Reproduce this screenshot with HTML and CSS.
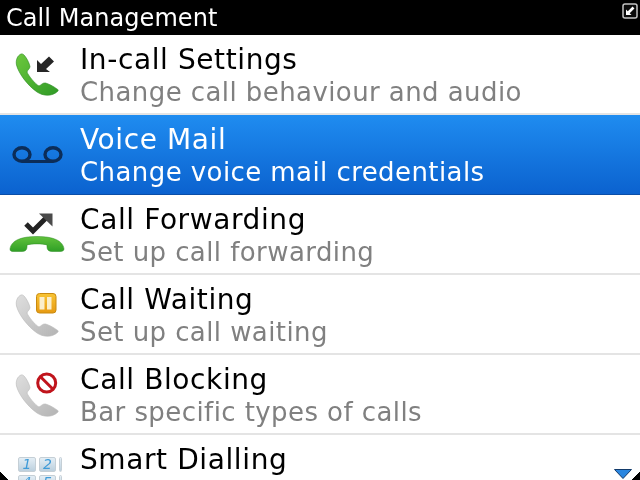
FILE: index.html
```html
<!DOCTYPE html>
<html lang="en">
<head>
<meta charset="utf-8">
<title>Call Management</title>
<link rel="stylesheet" href="styles.css">
</head>
<body>
<svg class="defs" width="0" height="0" aria-hidden="true">
  <defs>
    <linearGradient id="green" x1="0" y1="0" x2="1" y2="1">
      <stop offset="0" stop-color="#6cc83e"/><stop offset="1" stop-color="#2f9a26"/>
    </linearGradient>
    <linearGradient id="greenh" x1="0" y1="0" x2="0" y2="1">
      <stop offset="0" stop-color="#62c23c"/><stop offset="1" stop-color="#2f9f26"/>
    </linearGradient>
    <linearGradient id="grey" x1="0" y1="0" x2="1" y2="1">
      <stop offset="0" stop-color="#dedede"/><stop offset="1" stop-color="#b4b4b4"/>
    </linearGradient>
    <linearGradient id="amber" x1="0" y1="0" x2="0" y2="1">
      <stop offset="0" stop-color="#f8c434"/><stop offset="1" stop-color="#e79a12"/>
    </linearGradient>
    <path id="handset" d="M5 0 C1.500 1.500 -0.500 6 0.500 11 C2.500 19 11 31 21 38 C27 42 36 43 42 37 C42.500 36 42 35.500 41 35 C37 32 33 30 29.500 29 C27 28.500 25 31 23 32 C19 30 12 21 11 18 C11.500 16 14 14.500 14 12.500 C13 8 10 3 8 1 C7 0 6 -0.300 5 0 Z"/>
  </defs>
</svg>
<div class="screen">
  <header class="titlebar">
    <span class="title">Call Management</span>
    <svg class="corner-icon" width="16" height="16" viewBox="0 0 16 16">
      <rect x="1" y="1" width="14" height="14" rx="2" fill="#0a0a0a" stroke="#c4c4c4" stroke-width="1.500"/>
      <path d="M11.500 4.500 L6.500 9.500" stroke="#fff" stroke-width="2.600"/>
      <path d="M4 6.500 V12 H9.500 Z" fill="#fff"/>
    </svg>
  </header>
  <ul class="list">
    <li class="row">
      <svg class="icon" width="64" height="64" viewBox="0 0 64 64">
        <use href="#handset" x="16" y="11" fill="url(#green)" stroke="#2a8a20" stroke-width=".6"/>
        <path d="M37 29 V17 L41 21 L49 13.500 L54 18.500 L46 26 L50 29 Z" fill="#262626"/>
      </svg>
      <div class="text"><div class="name">In-call Settings</div><div class="desc">Change call behaviour and audio</div></div>
    </li>
    <li class="row selected">
      <svg class="icon" width="64" height="64" viewBox="0 0 64 64">
        <g fill="none" stroke="#0c2d58" stroke-width="3.400">
          <ellipse cx="22" cy="31.500" rx="8" ry="6.800"/><ellipse cx="53" cy="31.500" rx="8" ry="6.800"/>
          <path d="M22 38.500 H53" stroke-width="3"/>
        </g>
      </svg>
      <div class="text"><div class="name">Voice Mail</div><div class="desc">Change voice mail credentials</div></div>
    </li>
    <li class="row">
      <svg class="icon" width="64" height="64" viewBox="0 0 64 64">
        <path d="M26 21 L33 28 L46 15" fill="none" stroke="#232323" stroke-width="5"/>
        <path d="M39 10.500 H52.500 V23.500 Z" fill="#4a4a4a"/>
        <path d="M10 46 C11 38 20 33.500 37 33.500 C54 33.500 63 38 64 46 C64 48 62 48.500 59 48.500 H52 C49 48.500 47 47 47 44 V42 C43 40.500 31 40.500 27 42 V44 C27 47 25 48.500 22 48.500 H14 C11 48.500 10 48 10 46 Z" fill="url(#greenh)" stroke="#2a8a20" stroke-width=".5"/>
      </svg>
      <div class="text"><div class="name">Call Forwarding</div><div class="desc">Set up call forwarding</div></div>
    </li>
    <li class="row">
      <svg class="icon" width="64" height="64" viewBox="0 0 64 64">
        <use href="#handset" x="16" y="12" fill="url(#grey)" stroke="#b8b8b8" stroke-width=".6"/>
        <rect x="36.500" y="10.500" width="19.500" height="19.500" rx="3" fill="url(#amber)" stroke="#c98a10"/>
        <rect x="39.500" y="14" width="5" height="12.500" fill="#fbeecb"/>
        <rect x="47" y="14" width="4.500" height="12.500" fill="#fbeecb"/>
      </svg>
      <div class="text"><div class="name">Call Waiting</div><div class="desc">Set up call waiting</div></div>
    </li>
    <li class="row">
      <svg class="icon" width="64" height="64" viewBox="0 0 64 64">
        <use href="#handset" x="16" y="12" fill="url(#grey)" stroke="#b8b8b8" stroke-width=".6"/>
        <circle cx="46.700" cy="20" r="9" fill="#fff" stroke="#c0141c" stroke-width="3"/>
        <path d="M40.500 13.800 L53 26.200" stroke="#c0141c" stroke-width="3"/>
      </svg>
      <div class="text"><div class="name">Call Blocking</div><div class="desc">Bar specific types of calls</div></div>
    </li>
    <li class="row">
      <div class="keypad">
        <span class="key">1</span><span class="key">2</span><span class="key cut"></span>
        <span class="key">4</span><span class="key">5</span><span class="key cut"></span>
      </div>
      <div class="text"><div class="name">Smart Dialling</div></div>
    </li>
  </ul>
  <svg class="more" width="18" height="10" viewBox="0 0 18 10">
    <path d="M0.500 0.500 H17.500 L9 9.500 Z" fill="#2a86e0" stroke="#123a6a" stroke-width="1"/>
  </svg>
  <div class="round-bl"></div>
  <div class="round-br"></div>
</div>
</body>
</html>
```
FILE: styles.css
```css
* { box-sizing: border-box; }
html, body { margin: 0; padding: 0; background: #fff; }
body { width: 640px; height: 480px; overflow: hidden; font-family: "DejaVu Sans", sans-serif; }
.defs { position: absolute; }
.screen { position: relative; width: 640px; height: 480px; overflow: hidden; background: #fff; }
.titlebar { height: 35px; background: #000; color: #fff; display: flex; align-items: flex-start; justify-content: space-between; padding: 1px 2px 0 6px; }
.title { font-size: 24px; line-height: 34px; letter-spacing: 0.06px; filter: blur(0.3px); }
.corner-icon { margin-top: 2px; }
.list { list-style: none; margin: 0; padding: 0; }
.row { height: 80px; display: flex; align-items: flex-start; border-bottom: 2px solid #e4e4e4; overflow: hidden; }
.row.selected { background: linear-gradient(#1f8cf0, #0b62cf); border-bottom: 1px solid #0a4ea8; color: #fff; }
.icon { flex: none; width: 64px; height: 64px; margin: 8px 16px 0 0; overflow: visible; filter: blur(0.4px); }
.text { padding-top: 6px; filter: blur(0.35px); }
.name { font-size: 28px; line-height: 37px; letter-spacing: 0.6px; color: #000; }
.desc { font-size: 26px; line-height: 28px; letter-spacing: 0.42px; color: #808080; }
.selected .name, .selected .desc { color: #fff; }
.keypad { flex: none; width: 64px; height: 64px; margin: 22px 16px 0 0; padding-left: 18px; display: grid; grid-template-columns: 18px 17px 3px; grid-auto-rows: 15px; gap: 3px; overflow: hidden; filter: blur(0.4px); }
.key { background: linear-gradient(#e4eef5, #bcd0de); border: 1px solid #c5cfd6; border-radius: 2px; color: #3f9bd8; font-size: 14px; font-style: italic; line-height: 13px; text-align: center; }
.more { position: absolute; right: 8px; bottom: 1px; }
.round-bl, .round-br { position: absolute; bottom: 0; width: 8px; height: 8px; }
.round-bl { left: 0; background: linear-gradient(to bottom left, transparent 50%, #000 50%); }
.round-br { right: 0; background: linear-gradient(to bottom right, transparent 50%, #000 50%); }
```
